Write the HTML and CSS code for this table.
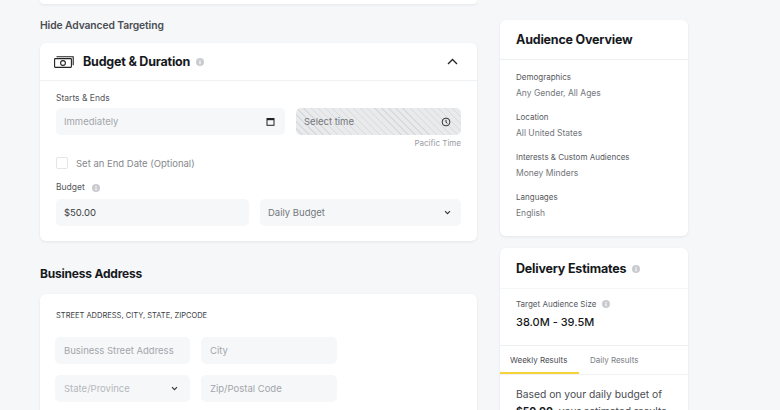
FILE: index.html
```html
<!DOCTYPE html>
<html lang="en">
<head>
<meta charset="utf-8">
<title>Ad Set</title>
<link rel="stylesheet" href="styles.css">
</head>
<body>
<div class="page">
  <main class="left">
    <div class="card-stub"></div>
    <a class="adv-link">Hide Advanced Targeting</a>

    <section class="card budget">
      <header class="card-head">
        <svg class="money" width="20" height="12" viewBox="0 0 20 12" fill="none" stroke="#222" stroke-width="1.1">
          <path d="M2.5 0.8H19.2V9.2"/>
          <rect x="0.6" y="2.6" width="16.8" height="8.8" rx="0.6"/>
          <circle cx="9" cy="7" r="2.4"/>
        </svg>
        <h2 class="card-title">Budget &amp; Duration</h2>
        <svg class="info" width="8" height="8" viewBox="0 0 10 10"><circle cx="5" cy="5" r="5" fill="#c9cbce"/><rect x="4.3" y="4.3" width="1.4" height="3.5" fill="#fff"/><circle cx="5" cy="2.9" r="0.8" fill="#fff"/></svg>
        <svg class="chev-up" width="11" height="7" viewBox="0 0 11 7" fill="none" stroke="#222" stroke-width="1.3"><path d="M1 6L5.5 1.5L10 6"/></svg>
      </header>
      <div class="card-body">
        <div class="label">Starts &amp; Ends</div>
        <div class="row row-dates">
          <div class="field">
            <span class="ph">Immediately</span>
            <svg width="9" height="9" viewBox="0 0 9 9" fill="none" stroke="#222"><rect x="1" y="1.5" width="7" height="6.8" stroke-width="1"/><path d="M1 2.3H8" stroke-width="1.8"/></svg>
          </div>
          <div class="field hatched">
            <span class="ph dark">Select time</span>
            <svg width="10" height="10" viewBox="0 0 10 10" fill="none" stroke="#333" stroke-width="1"><circle cx="5" cy="5" r="3.9"/><path d="M5 2.8V5.2L6.4 6.3"/></svg>
          </div>
        </div>
        <div class="tz">Pacific Time</div>
        <label class="check-row"><span class="checkbox"></span><span>Set an End Date (Optional)</span></label>
        <div class="label with-info">Budget
          <svg class="info" width="8" height="8" viewBox="0 0 10 10"><circle cx="5" cy="5" r="5" fill="#c9cbce"/><rect x="4.3" y="4.3" width="1.4" height="3.5" fill="#fff"/><circle cx="5" cy="2.9" r="0.8" fill="#fff"/></svg>
        </div>
        <div class="row row-budget">
          <div class="field"><span class="val">$50.00</span></div>
          <div class="field">
            <span class="val mid">Daily Budget</span>
            <svg width="7" height="5" viewBox="0 0 7 5" fill="none" stroke="#333" stroke-width="1.1"><path d="M1 1.2L3.5 3.7L6 1.2"/></svg>
          </div>
        </div>
      </div>
    </section>

    <h3 class="section-title">Business Address</h3>
    <section class="card address">
      <div class="caps">STREET ADDRESS, CITY, STATE, ZIPCODE</div>
      <div class="addr-grid">
        <div class="field"><span class="ph">Business Street Address</span></div>
        <div class="field"><span class="ph">City</span></div>
        <div class="field"><span class="ph light">State/Province</span>
          <svg width="7" height="5" viewBox="0 0 7 5" fill="none" stroke="#333" stroke-width="1.1"><path d="M1 1.2L3.5 3.7L6 1.2"/></svg>
        </div>
        <div class="field"><span class="ph">Zip/Postal Code</span></div>
      </div>
    </section>
  </main>

  <aside class="right">
    <section class="card side overview">
      <header class="side-head"><h2 class="card-title">Audience Overview</h2></header>
      <div class="ov-body">
        <div class="ov-item"><div class="ov-label">Demographics</div><div class="ov-val">Any Gender, All Ages</div></div>
        <div class="ov-item"><div class="ov-label">Location</div><div class="ov-val">All United States</div></div>
        <div class="ov-item"><div class="ov-label">Interests &amp; Custom Audiences</div><div class="ov-val">Money Minders</div></div>
        <div class="ov-item"><div class="ov-label">Languages</div><div class="ov-val">English</div></div>
      </div>
    </section>

    <section class="card side delivery">
      <header class="side-head"><h2 class="card-title">Delivery Estimates</h2>
        <svg class="info" width="8" height="8" viewBox="0 0 10 10"><circle cx="5" cy="5" r="5" fill="#c9cbce"/><rect x="4.3" y="4.3" width="1.4" height="3.5" fill="#fff"/><circle cx="5" cy="2.9" r="0.8" fill="#fff"/></svg>
      </header>
      <div class="est">
        <div class="ov-label with-info">Target Audience Size
          <svg class="info" width="8" height="8" viewBox="0 0 10 10"><circle cx="5" cy="5" r="5" fill="#c9cbce"/><rect x="4.3" y="4.3" width="1.4" height="3.5" fill="#fff"/><circle cx="5" cy="2.9" r="0.8" fill="#fff"/></svg>
        </div>
        <div class="est-val">38.0M - 39.5M</div>
      </div>
      <nav class="tabs">
        <span class="tab active">Weekly Results</span>
        <span class="tab">Daily Results</span>
      </nav>
      <p class="result-text">Based on your daily budget of <b>$50.00</b>, your estimated results</p>
    </section>
  </aside>
</div>
</body>
</html>
```

FILE: styles.css
```css
* { box-sizing: border-box; }
html, body { margin: 0; padding: 0; }
body {
  background: #f6f7f9;
  font-family: Inter, "Noto Sans", "Liberation Sans", sans-serif;
  color: #16191c;
  width: 780px;
  height: 410px;
  overflow: hidden;
}
.page {
  display: flex;
  gap: 23px;
  padding-left: 40px;
  align-items: flex-start;
}
.left { width: 437px; display: flex; flex-direction: column; }
.right { width: 188px; display: flex; flex-direction: column; gap: 12px; padding-top: 20px; }

.card {
  background: #fff;
  border-radius: 6px;
  box-shadow: 0 1px 3px rgba(20, 30, 45, 0.08);
}
.card-stub {
  height: 4px;
  background: #fff;
  border-radius: 0 0 6px 6px;
  box-shadow: 0 1px 3px rgba(20, 30, 45, 0.08);
}
.adv-link {
  margin-top: 14px;
  font-size: 10.3px;
  line-height: 14px;
  font-weight: 600;
  color: #4a4d52;
  letter-spacing: -0.1px;
}

.budget { margin-top: 11px; }
.card-head {
  height: 38px;
  display: flex;
  align-items: center;
  padding: 0 19px 0 14px;
  border-bottom: 1px solid #f0f1f3;
}
.money { margin-right: 9px; }
.card-title {
  margin: 0;
  font-size: 12.5px;
  line-height: 16px;
  font-weight: 700;
  letter-spacing: -0.2px;
  color: #16191c;
}
.info { display: inline-block; flex: none; }
.card-head .info { margin-left: 6px; margin-top: 1px; }
.chev-up { margin-left: auto; }

.card-body { padding: 12px 16px 15px; display: flex; flex-direction: column; }
.label {
  font-size: 8.5px;
  line-height: 11px;
  color: #55585d;
  display: flex;
  align-items: center;
  gap: 7px;
}
.row { display: grid; column-gap: 11px; }
.row-dates { grid-template-columns: 229px 165px; margin-top: 4px; }
.row-budget { grid-template-columns: 193px 201px; margin-top: 6px; }

.field {
  height: 27px;
  background: #f6f7f9;
  border-radius: 5px;
  display: flex;
  align-items: center;
  justify-content: space-between;
  padding: 0 10px 0 8px;
  font-size: 9.5px;
}
.ph { color: #a3a6ab; }
.ph.dark { color: #74777c; }
.ph.light { color: #b5b8bc; }
.val { color: #3a3d42; }
.val.mid { color: #74777c; }
.hatched {
  background-color: #e9eaec;
  background-image: repeating-linear-gradient(45deg, transparent 0 4px, #d9dadc 4px 5px);
}
.tz {
  margin-top: 3px;
  align-self: flex-end;
  font-size: 8px;
  line-height: 10px;
  color: #9a9da2;
}
.check-row {
  margin-top: 9px;
  display: flex;
  align-items: center;
  gap: 8px;
  font-size: 9.5px;
  color: #85888d;
}
.checkbox {
  width: 12px;
  height: 12px;
  border: 1px solid #e3e5e8;
  border-radius: 2px;
  background: #fff;
}
.label.with-info { margin-top: 13px; }

.section-title {
  margin: 25px 0 0;
  font-size: 12px;
  line-height: 15px;
  font-weight: 700;
  letter-spacing: -0.2px;
}
.address {
  margin-top: 13px;
  padding: 17px 15px 20px;
  border-radius: 6px 6px 0 0;
}
.caps {
  font-size: 7.5px;
  line-height: 10px;
  color: #3a3d42;
  padding-left: 1px;
}
.addr-grid {
  margin-top: 16px;
  display: grid;
  grid-template-columns: 135px 136px;
  gap: 11px;
}
.addr-grid .field { padding: 0 12px 0 9px; }

.side-head {
  height: 40px;
  padding: 0 16px;
  display: flex;
  align-items: center;
  gap: 6px;
  border-bottom: 1px solid #eeeff1;
}
.ov-body { padding: 12px 16px 18px; display: flex; flex-direction: column; gap: 14px; }
.ov-label {
  font-size: 8px;
  line-height: 10px;
  color: #55585d;
}
.ov-val {
  margin-top: 6px;
  font-size: 8.5px;
  line-height: 10px;
  color: #74777c;
}
.delivery .side-head {
  height: 41px;
  padding-top: 2px;
  border-bottom-color: #f5f6f7;
}
.est { padding: 10px 16px 16px; border-bottom: 1px solid #eeeff1; }
.ov-label.with-info { display: flex; align-items: center; gap: 6px; }
.est-val {
  margin-top: 6px;
  font-size: 11px;
  line-height: 14px;
  font-weight: 500;
  color: #16191c;
}
.tabs {
  display: flex;
  height: 29px;
  border-bottom: 1px solid #f0f1f3;
}
.tab {
  padding: 0 11px 0 11px;
  display: flex;
  align-items: center;
  font-size: 8px;
  white-space: nowrap;
  color: #7a7d82;
}
.tab.active {
  color: #4a4d52;
  border-bottom: 2px solid #f7d23a;
  padding: 2px 0 0 10px;
  width: 79px;
}
.result-text {
  margin: 0;
  padding: 11px 16px;
  font-size: 10.3px;
  line-height: 17px;
  color: #4a4d52;
}
.result-text b { font-weight: 700; color: #16191c; }
```
